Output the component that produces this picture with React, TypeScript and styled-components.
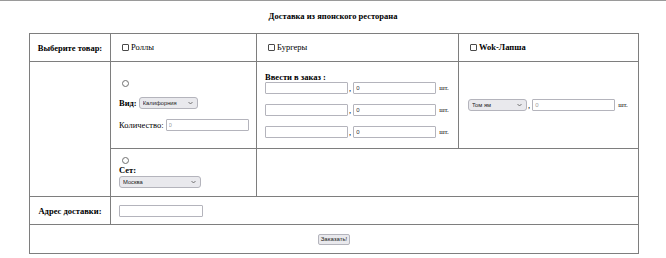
import React from "react";
import styled, { createGlobalStyle } from "styled-components";

const Global = createGlobalStyle`
  html, body { margin: 0; padding: 0; background: #fff; }
  body {
    font-family: "Liberation Serif", "Times New Roman", serif;
    color: #000;
    -webkit-font-smoothing: antialiased;
  }
`;

const Page = styled.div`
  width: 666px;
  height: 258px;
  border-top: 1px solid #9a9a9a;
  box-sizing: border-box;
  overflow: hidden;
`;

const Title = styled.h1`
  margin: 0;
  padding-top: 9px;
  height: 32px;
  box-sizing: border-box;
  line-height: 12px;
  font-size: 8.5px;
  font-weight: bold;
  text-align: center;
`;

const Table = styled.table`
  margin-left: 29px;
  width: 609px;
  table-layout: fixed;
  border-collapse: collapse;
  border: 1px solid #7e7e7e;
  font-size: 8.5px;
`;

const Row = styled.tr<{ $h: number }>`
  height: ${(p) => p.$h}px;
`;

const Head = styled.th`
  border: 1px solid #7e7e7e;
  padding: 0 4px;
  font-weight: bold;
  text-align: center;
  vertical-align: middle;
  white-space: nowrap;
`;

const Cell = styled.td<{ $center?: boolean; $pad?: number }>`
  border: 1px solid #7e7e7e;
  padding: 0 ${(p) => p.$pad ?? 8}px;
  vertical-align: middle;
  text-align: ${(p) => (p.$center ? "center" : "left")};
  white-space: nowrap;
`;

const CheckLabel = styled.label<{ $bold?: boolean }>`
  display: inline-flex;
  align-items: center;
  gap: 2px;
  font-weight: ${(p) => (p.$bold ? "bold" : "normal")};
`;

const Check = styled.input.attrs({ type: "checkbox" })`
  appearance: none;
  width: 7px;
  height: 7px;
  box-sizing: border-box;
  margin: 0 0 0 3px;
  border: 1px solid #4a4a4a;
  border-radius: 1px;
  background: #fff;
`;

const Radio = styled.input.attrs({ type: "radio" })`
  appearance: none;
  display: block;
  width: 7px;
  height: 7px;
  box-sizing: border-box;
  margin: 0 0 0 3px;
  border: 1px solid #707070;
  border-radius: 50%;
  background: #fff;
`;

const Stack = styled.div<{ $gap: number }>`
  display: flex;
  flex-direction: column;
  align-items: flex-start;
  gap: ${(p) => p.$gap}px;
`;

const Line = styled.div<{ $gap?: number }>`
  display: flex;
  align-items: center;
  gap: ${(p) => p.$gap ?? 2}px;
  line-height: 10px;
`;

const Comma = styled.span`
  margin: 0 2px 0 1px;
`;

const Bold = styled.b`
  font-weight: bold;
  line-height: 10px;
`;

const SelectWrap = styled.span`
  position: relative;
  display: inline-flex;
`;

const Select = styled.select<{ $w: number }>`
  appearance: none;
  width: ${(p) => p.$w}px;
  height: 12px;
  box-sizing: border-box;
  padding: 0 8px 0 3px;
  margin: 0;
  font-family: "Liberation Sans", Arial, sans-serif;
  font-size: 5.8px;
  color: #222;
  background-color: #e9e9ed;
  border: 1px solid #b4b4bc;
  border-radius: 3px;
`;

const Chevron = styled.svg`
  position: absolute;
  right: 5px;
  top: 4px;
  width: 5px;
  height: 4px;
  pointer-events: none;
`;

const TextInput = styled.input<{ $w: number }>`
  width: ${(p) => p.$w}px;
  height: 12px;
  box-sizing: border-box;
  padding: 0 2px;
  margin: 0;
  font-family: "Liberation Sans", Arial, sans-serif;
  font-size: 6px;
  color: #333;
  border: 1px solid #b4b4bc;
  border-radius: 1px;
  background: #fff;
  &::placeholder { color: #a0a0a0; }
`;

const Unit = styled.span`
  margin-left: 3px;
  font-size: 7px;
  color: #111;
`;

const Button = styled.button`
  height: 11px;
  padding: 0 2px;
  font-family: "Liberation Sans", Arial, sans-serif;
  font-size: 6px;
  line-height: 9px;
  color: #222;
  background: #e9e9ed;
  border: 1px solid #b4b4bc;
  border-radius: 2px;
`;

const Dropdown = ({ w, value, options }: { w: number; value: string; options: string[] }) => (
  <SelectWrap>
    <Select $w={w} defaultValue={value}>
      {options.map((o) => (
        <option key={o}>{o}</option>
      ))}
    </Select>
    <Chevron viewBox="0 0 5 4">
      <path d="M0.5 1 L2.5 3 L4.5 1" fill="none" stroke="#555" strokeWidth="0.8" />
    </Chevron>
  </SelectWrap>
);

const OrderRow = () => (
  <Line $gap={0}>
    <TextInput $w={83} />
    <Comma>,</Comma>
    <TextInput $w={83} defaultValue="0" />
    <Unit>шт.</Unit>
  </Line>
);

export default function App() {
  return (
    <Page>
      <Global />
      <Title>Доставка из японского ресторана</Title>
      <Table>
        <colgroup>
          <col style={{ width: 81 }} />
          <col style={{ width: 146 }} />
          <col style={{ width: 202 }} />
          <col style={{ width: 180 }} />
        </colgroup>
        <tbody>
          <Row $h={28}>
            <Head>Выберите товар:</Head>
            <Cell>
              <CheckLabel>
                <Check />
                Роллы
              </CheckLabel>
            </Cell>
            <Cell>
              <CheckLabel>
                <Check />
                Бургеры
              </CheckLabel>
            </Cell>
            <Cell>
              <CheckLabel $bold>
                <Check />
                Wok-Лапша
              </CheckLabel>
            </Cell>
          </Row>
          <Row $h={87}>
            <Cell rowSpan={2} />
            <Cell>
              <Stack $gap={10}>
                <Radio name="r" />
                <Line>
                  <Bold>Вид:</Bold>
                  <Dropdown w={59} value="Калифорния" options={["Калифорния", "Филадельфия"]} />
                </Line>
                <Line>
                  <span>Количество:</span>
                  <TextInput $w={83} placeholder="0" />
                </Line>
              </Stack>
            </Cell>
            <Cell $pad={8}>
              <Stack $gap={10}>
                <Stack $gap={0}>
                  <Bold>Ввести в заказ :</Bold>
                  <OrderRow />
                </Stack>
                <OrderRow />
                <OrderRow />
              </Stack>
            </Cell>
            <Cell $pad={9}>
              <Line $gap={0}>
                <Dropdown w={59} value="Том ям" options={["Том ям", "Удон"]} />
                <Comma>,</Comma>
                <TextInput $w={83} placeholder="0" />
                <Unit>шт.</Unit>
              </Line>
            </Cell>
          </Row>
          <Row $h={48}>
            <Cell>
              <Stack $gap={1}>
                <Radio name="r" />
                <Bold>Сет:</Bold>
                <Dropdown w={82} value="Москва" options={["Москва", "Токио"]} />
              </Stack>
            </Cell>
            <Cell colSpan={2} />
          </Row>
          <Row $h={28}>
            <Head>Адрес доставки:</Head>
            <Cell colSpan={3}>
              <TextInput $w={84} />
            </Cell>
          </Row>
          <Row $h={29}>
            <Cell colSpan={4} $center>
              <Button>Заказать!</Button>
            </Cell>
          </Row>
        </tbody>
      </Table>
    </Page>
  );
}
